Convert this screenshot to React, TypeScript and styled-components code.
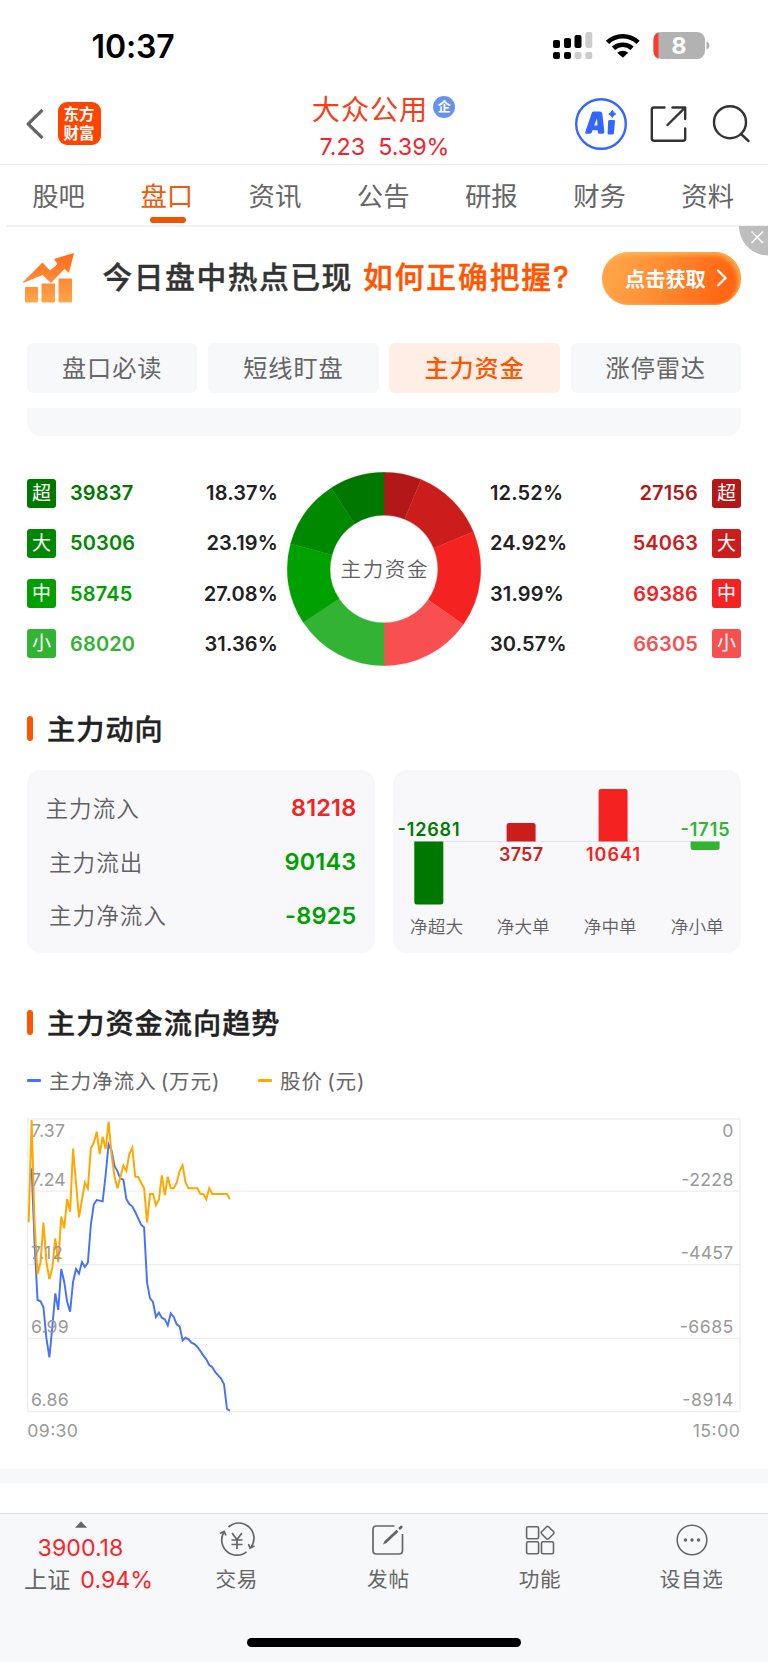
import React from 'react';
import styled, { createGlobalStyle } from 'styled-components';

const Global = createGlobalStyle`
  * { box-sizing: border-box; }
  body { margin: 0; background: #fff; }
`;

const FONT = `Inter, 'Noto Sans CJK SC', 'Liberation Sans', sans-serif`;

const Screen = styled.main`
  width: 768px;
  height: 1662px;
  display: flex;
  flex-direction: column;
  background: #fff;
  font-family: ${FONT};
  color: #222;
  overflow: hidden;
  white-space: nowrap;
`;

const StatusBar = styled.div`
  height: 88px;
  flex: none;
  display: flex;
  justify-content: space-between;
  padding: 0 57px 0 91.5px;
`;
const Clock = styled.div`
  font-size: 32px;
  line-height: 39px;
  font-weight: 600;
  color: #000;
  padding-top: 27px;
  letter-spacing: -0.1px;
`;
const StatusIcons = styled.div`
  padding-top: 30px;
`;

const Header = styled.header`
  height: 77px;
  flex: none;
  display: flex;
  align-items: flex-start;
  border-bottom: 1.5px solid #e8e8ea;
`;
const HeaderLeft = styled.div`
  width: 290px;
  display: flex;
  padding: 14px 0 0 26px;
`;
const BackIcon = styled.svg`
  margin: 6px 13.5px 0 0;
`;
const Logo = styled.div`
  width: 43px;
  height: 43px;
  border-radius: 9px;
  background: #ff4400;
  color: #fff;
  font-family: 'Noto Sans CJK SC', sans-serif;
  font-weight: 700;
  font-size: 15.5px;
  line-height: 18.5px;
  padding: 2px 0 0 6px;
`;
const HeaderTitle = styled.div`
  width: 190px;
  display: flex;
  flex-direction: column;
  align-items: center;
`;
const StockName = styled.div`
  display: flex;
  align-items: center;
  height: 40px;
  margin: -1px 0 0 -3px;
  font-size: 28.2px;
  letter-spacing: 0.9px;
  color: #f4401a;
`;
const Verified = styled.span`
  width: 22px;
  height: 22px;
  border-radius: 50%;
  margin-left: 5px;
  background: #6593ea;
  color: #fff;
  font-size: 13px;
  font-weight: 700;
  line-height: 21px;
  text-align: center;
  letter-spacing: 0;
`;
const StockPrice = styled.div`
  display: flex;
  gap: 13px;
  font-size: 23.3px;
  line-height: 28px;
  margin: 6px 0 0 -1px;
  color: #f5222d;
`;
const HeaderActions = styled.div`
  padding: 10px 0 0 95px;
`;

const Tabs = styled.nav`
  height: 62px;
  flex: none;
  margin-left: 6px;
  display: flex;
  border-bottom: 2px solid #f1f1f2;
`;
const Tab = styled.div<{ $on?: boolean }>`
  width: 108.2px;
  display: flex;
  flex-direction: column;
  align-items: center;
  font-size: 26.4px;
  line-height: 38px;
  padding: 12px 3px 0 0;
  color: ${(p) => (p.$on ? '#f15a0a' : '#666')};
`;
const TabMark = styled.i`
  width: 36px;
  height: 6px;
  border-radius: 3px;
  background: #ef5500;
  margin: 2px 0 0 2px;
`;

const Banner = styled.section`
  position: relative;
  height: 116px;
  flex: none;
  display: flex;
  padding: 24px 27px 0 22px;
`;
const BannerText = styled.div`
  display: flex;
  width: 499px;
  margin-left: 27.5px;
  gap: 10px;
  font-size: 29.8px;
  line-height: 53px;
  font-weight: 500;
  letter-spacing: 1.5px;
  color: #333;
  -webkit-text-stroke: 0.4px currentColor;
`;
const Accent = styled.span`
  color: #ff5500;
  letter-spacing: 1.9px;
`;
const BannerButton = styled.div`
  width: 139px;
  height: 53px;
  border-radius: 27px;
  background: linear-gradient(105deg, #ffa347 10%, #ff8a30 45%, #ff6714 85%);
  box-shadow: inset -3px 3px 4px rgba(255, 200, 95, 0.65), inset 0 -1px 2px rgba(255, 180, 100, 0.6);
  display: flex;
  align-items: center;
  padding-left: 23.5px;
  padding-bottom: 1px;
  gap: 10px;
  margin-top: 1px;
  color: #fff;
  font-size: 20.2px;
  font-weight: 700;
`;
const CloseCorner = styled.svg`
  position: absolute;
  right: 0;
  top: -1px;
`;

const Chips = styled.div`
  flex: none;
  display: grid;
  grid-template-columns: repeat(4, 1fr);
  gap: 10.8px;
  padding: 0 27px;
`;
const Chip = styled.div<{ $on?: boolean }>`
  height: 50px;
  border-radius: 6px;
  background: ${(p) => (p.$on ? '#ffeee6' : '#f7f8fa')};
  color: ${(p) => (p.$on ? '#ff5500' : '#666')};
  font-weight: ${(p) => (p.$on ? 500 : 400)};
  font-size: 24.2px;
  letter-spacing: 0.9px;
  line-height: 52px;
  text-align: center;
`;
const CardTail = styled.div`
  flex: none;
  height: 28px;
  margin: 14.5px 27px 0;
  border-radius: 0 0 14px 14px;
  background: #f7f8fa;
`;

const Distribution = styled.section`
  flex: none;
  height: 194px;
  margin: 36px 27px 0;
  display: flex;
  justify-content: space-between;
`;
const OrderColumn = styled.div`
  width: 251px;
  padding-top: 7px;
`;
const OrderRow = styled.div<{ $flip?: boolean }>`
  height: 29px;
  margin-bottom: 21.3px;
  display: flex;
  align-items: center;
  flex-direction: ${(p) => (p.$flip ? 'row-reverse' : 'row')};
  font-size: 20px;
  letter-spacing: 0.15px;
  line-height: 31px;
  font-weight: 600;
`;
const Badge = styled.span<{ $c: string }>`
  width: 29px;
  height: 29px;
  border-radius: 3px;
  background: ${(p) => p.$c};
  color: #fff;
  font-size: 19px;
  font-weight: 400;
  line-height: 30px;
  letter-spacing: 0;
  text-align: center;
`;
const Amount = styled.span<{ $c: string }>`
  color: ${(p) => p.$c};
  margin: 0 14px;
  padding-top: 1px;
  flex: 1;
`;
const FlipAmount = styled(Amount)`
  text-align: right;
`;
const Percent = styled.span`
  color: #222;
  padding-top: 1px;
`;

const Heading = styled.h2<{ $top: number }>`
  flex: none;
  margin: ${(p) => p.$top}px 27px 0;
  height: 40px;
  display: flex;
  align-items: center;
  font-size: 28.2px;
  font-weight: 500;
  letter-spacing: 1px;
  color: #222;
  -webkit-text-stroke: 0.4px currentColor;
  span {
    padding-bottom: 2px;
  }
  &::before {
    content: '';
    width: 5.5px;
    height: 25px;
    border-radius: 3px;
    background: #ff5500;
    margin-right: 14.5px;
  }
`;

const Panels = styled.section`
  flex: none;
  display: grid;
  grid-template-columns: 1fr 1fr;
  gap: 18px;
  margin: 21px 27px 0;
`;
const Panel = styled.div`
  height: 183px;
  border-radius: 14px;
  background: #f8f8fb;
`;
const FlowPanel = styled(Panel)`
  padding: 11px 18.5px 0;
`;
const FlowRow = styled.div<{ $indent?: boolean; $c: string }>`
  height: 53.8px;
  display: flex;
  align-items: center;
  justify-content: space-between;
  padding-left: ${(p) => (p.$indent ? 3.5 : 0)}px;
  padding-bottom: 1px;
  font-size: 22.5px;
  font-weight: 350;
  letter-spacing: 1.1px;
  color: #606060;
  b {
    font-size: 23.5px;
    font-weight: 600;
    letter-spacing: 0.2px;
    padding-top: 2px;
    color: ${(p) => p.$c};
  }
`;

const Legend = styled.div`
  flex: none;
  display: flex;
  height: 32px;
  margin: 22px 27px 0;
  font-size: 20.6px;
  color: #666;
`;
const LegendItem = styled.div<{ $w: number; $c: string }>`
  width: ${(p) => p.$w}px;
  display: flex;
  align-items: center;
  letter-spacing: 0.9px;
  word-spacing: -2.5px;
  span {
    padding-bottom: 1.5px;
  }
  &::before {
    content: '';
    width: 14px;
    height: 3.5px;
    border-radius: 1px;
    background: ${(p) => p.$c};
    margin-right: 8px;
  }
`;
const TrendChart = styled.svg`
  flex: none;
  display: block;
  margin: 21px 0 0 27px;
`;
const Divider = styled.div`
  flex: none;
  height: 14px;
  margin-top: 26px;
  background: #f7f8fa;
`;

const BottomBar = styled.footer`
  flex: none;
  height: 149.5px;
  margin-top: auto;
  border-top: 1.5px solid #dedfe1;
  background: #f7f8fa;
  display: flex;
  flex-direction: column;
  align-items: center;
`;
const BottomItems = styled.div`
  display: flex;
  width: 100%;
  height: 124px;
`;
const IndexItem = styled.div`
  width: 161px;
  display: flex;
  flex-direction: column;
  align-items: center;
  font-size: 23.2px;
  color: #ff1f28;
`;
const IndexArrow = styled.svg`
  margin-top: 7px;
`;
const IndexLine = styled.div`
  display: flex;
  gap: 10px;
  line-height: 32px;
  margin-left: 16px;
`;
const IndexValue = styled.div`
  line-height: 32px;
  margin-top: 4px;
`;
const IndexName = styled.span`
  color: #666;
`;
const Action = styled.div`
  width: 151.6px;
  display: flex;
  flex-direction: column;
  align-items: center;
  font-size: 20.6px;
  letter-spacing: 0.7px;
  line-height: 30px;
  color: #666;
  svg { margin: 8px 0 7px; }
`;
const HomeIndicator = styled.div`
  width: 274px;
  height: 9px;
  border-radius: 5px;
  background: #000;
`;

const OUT = [
  { name: '超', value: '39837', pct: '18.37%', share: 18.37, color: '#007800' },
  { name: '大', value: '50306', pct: '23.19%', share: 23.19, color: '#008900' },
  { name: '中', value: '58745', pct: '27.08%', share: 27.08, color: '#00a000' },
  { name: '小', value: '68020', pct: '31.36%', share: 31.36, color: '#33b333' },
];
const IN = [
  { name: '超', value: '27156', pct: '12.52%', share: 12.52, color: '#b21818' },
  { name: '大', value: '54063', pct: '24.92%', share: 24.92, color: '#cc1d1d' },
  { name: '中', value: '69386', pct: '31.99%', share: 31.99, color: '#f52222' },
  { name: '小', value: '66305', pct: '30.57%', share: 30.57, color: '#f85050' },
];

function Donut() {
  const c = 97;
  const R = 96.8;
  const r = 53.8;
  const slices = [...IN, ...[...OUT].reverse()];
  let at = 0;
  return (
    <svg width="194" height="194" viewBox="0 0 194 194">
      {slices.map((s, i) => {
        const a = (at / 200) * 2 * Math.PI;
        at += s.share;
        const b = (at / 200) * 2 * Math.PI;
        const p = (q: number, t: number) => `${c + q * Math.sin(t)} ${c - q * Math.cos(t)}`;
        return (
          <path
            key={i}
            fill={s.color}
            stroke={s.color}
            strokeWidth="0.3"
            d={`M${p(R, a)} A${R} ${R} 0 0 1 ${p(R, b)} L${p(r, b)} A${r} ${r} 0 0 0 ${p(r, a)} Z`}
          />
        );
      })}
      <text x="97" y="104.5" textAnchor="middle" fontSize="20.5" fontWeight="350" textLength="87" fill="#606060" fontFamily={FONT}>
        主力资金
      </text>
    </svg>
  );
}

const BARS = [
  { x: 21.3, y: 71.5, h: 63, c: '#007800', v: '-12681', tx: 4.5, ty: 66, w: 62, n: '净超大', nx: 17 },
  { x: 113.6, y: 53, h: 18.5, c: '#cc1d1d', v: '3757', tx: 106, ty: 91, w: 44, n: '净大单', nx: 103.7 },
  { x: 205.6, y: 19, h: 52.5, c: '#f52222', v: '10641', tx: 193, ty: 91, w: 54, n: '净中单', nx: 190.7 },
  { x: 297.6, y: 71.5, h: 8.5, c: '#33b333', v: '-1715', tx: 287.5, ty: 66, w: 49, n: '净小单', nx: 277.7 },
];

function NetBars() {
  return (
    <svg width="348" height="183" viewBox="0 0 348 183" fontFamily={FONT}>
      <path d="M21 71.5H327" stroke="#e4e4e8" />
      {BARS.map((b) => {
        const up = b.y < 71;
        return (
          <g key={b.n}>
            <path
              fill={b.c}
              d={
                up
                  ? `M${b.x} ${b.y + b.h}V${b.y + 2.5}q0-2.5 2.5-2.5h24q2.5 0 2.5 2.5V${b.y + b.h}z`
                  : `M${b.x} ${b.y}V${b.y + b.h - 2.5}q0 2.5 2.5 2.5h24q2.5 0 2.5-2.5V${b.y}z`
              }
            />
            <text x={b.tx} y={b.ty} fontSize="18" fontWeight="600" fill={b.c} textLength={b.w}>
              {b.v}
            </text>
            <text x={b.nx} y="163" fontSize="17.6" fontWeight="350" fill="#606060" textLength="53">
              {b.n}
            </text>
          </g>
        );
      })}
    </svg>
  );
}

// Chart units are thirds of a pixel, one sample per minute.
const STEP = 8.88;
const START = 86;
const PRICE = [
  367, 60, 370, 523, 487, 368, 485, 538, 503, 415, 487, 350, 385, 297, 335, 146, 250, 352, 300, 248, 265, 145, 128, 95,
  162, 110, 147, 65, 163, 230, 265, 230, 197, 213, 162, 143, 230, 231, 248, 265, 367, 282, 282, 316, 299, 226, 285, 230,
  265, 265, 248, 213, 196, 247, 265, 265, 265, 265, 282, 282, 298, 265, 282, 282, 282, 282, 282, 282, 298,
];
const FLOW = [
  205, 430, 600, 604, 622, 715, 772, 680, 580, 630, 507, 545, 605, 635, 545, 507, 521, 486, 501, 488, 375, 313, 300,
  302, 304, 225, 133, 152, 198, 214, 236, 239, 297, 312, 319, 336, 355, 374, 382, 548, 595, 606, 651, 638, 653, 658,
  676, 640, 651, 673, 679, 721, 713, 718, 728, 732, 741, 753, 766, 778, 795, 801, 816, 826, 836, 853, 927, 932,
];
const line = (ys: number[], from: number) => ys.map((y, i) => `${START + (i + from) * STEP},${y}`).join(' ');

const AXIS = [
  { y: 112, l: '7.37', lw: 102, r: '0', rw: 30 },
  { y: 258, l: '7.24', lw: 104, r: '-2228', rw: 156 },
  { y: 478, l: '7.12', lw: 95, r: '-4457', rw: 158 },
  { y: 699, l: '6.99', lw: 113, r: '-6685', rw: 161 },
  { y: 919, l: '6.86', lw: 113, r: '-8914', rw: 153 },
];

function Trend() {
  return (
    <TrendChart width="714" height="325" viewBox="81 54 2142 975" fontFamily={FONT}>
      <g stroke="#eeeeef" strokeWidth="4" fill="none">
        <path d="M83 57H2220V935H83zM83 273.5H2220M83 494H2220M83 715H2220" />
      </g>
      <polyline points={line(FLOW, 1)} fill="none" stroke="#4472f8" strokeWidth="5.8" />
      <polyline points={line(PRICE, 0)} fill="none" stroke="#ffa800" strokeWidth="6" />
      <g fontSize="53" fill="#999">
        {AXIS.map((a) => (
          <React.Fragment key={a.y}>
            <text x="93" y={a.y} textLength={a.lw}>{a.l}</text>
            <text x="2200" y={a.y} textAnchor="end" textLength={a.rw}>{a.r}</text>
          </React.Fragment>
        ))}
        <text x="82" y="1010" textLength="152">09:30</text>
        <text x="2220" y="1010" textAnchor="end" textLength="142">15:00</text>
      </g>
    </TrendChart>
  );
}

const TABS = ['股吧', '盘口', '资讯', '公告', '研报', '财务', '资料'];

export default function App() {
  return (
    <Screen>
      <Global />
      <StatusBar>
        <Clock>10:37</Clock>
        <StatusIcons>
          <svg width="158" height="32" viewBox="0 0 158 32">
            <g>
              <rect x="0" y="10" width="7" height="8" rx="2" />
              <rect x="11" y="8" width="7" height="10" rx="2" />
              <rect x="21.5" y="5" width="7" height="13" rx="2" />
              <rect x="32.3" y="2" width="7" height="16" rx="2" fill="#ccc" />
              <rect x="0" y="22" width="7" height="7" rx="2" />
              <rect x="11" y="22" width="7" height="7" rx="2" />
              <rect x="21.5" y="22" width="7" height="7" rx="2" fill="#ccc" />
              <rect x="32.3" y="22" width="7" height="7" rx="2" fill="#ccc" />
            </g>
            <g fill="none" stroke="#000" strokeWidth="4.6">
              <path d="M54.5 12.4a22 22 0 0 1 30.6 0" />
              <path d="M60.5 18.3a13.8 13.8 0 0 1 18.600 0" />
            </g>
            <path d="M64.3 22.8a8.2 8.2 0 0 1 11 0L69.8 27.8z" />
            <rect x="100.5" y="2" width="51.5" height="27" rx="8" fill="#b2b2b2" />
            <path d="M105.5 2.300a8 8 0 0 0-5 7.700v11a8 8 0 0 0 5 7.700z" fill="#ff3b30" />
            <path d="M153.5 11.2q3 1.5 3 4.3t-3 4.3z" fill="#b2b2b2" />
            <text x="126" y="23.5" fontSize="23.5" fontWeight="700" fill="#fff" textAnchor="middle">8</text>
          </svg>
        </StatusIcons>
      </StatusBar>

      <Header>
        <HeaderLeft>
          <BackIcon width="18" height="32" viewBox="0 0 18 32" fill="none" stroke="#666" strokeWidth="3.2">
            <path d="M16.5 1.8L2.2 16l14.3 14.2" strokeLinejoin="round" />
          </BackIcon>
          <Logo>
            东方
            <br />
            财富
          </Logo>
        </HeaderLeft>
        <HeaderTitle>
          <StockName>
            大众公用<Verified>企</Verified>
          </StockName>
          <StockPrice>
            <span>7.23</span>
            <span>5.39%</span>
          </StockPrice>
        </HeaderTitle>
        <HeaderActions>
          <svg width="180" height="54" viewBox="0 0 180 54" fill="none">
            <circle cx="26" cy="26" r="24.8" stroke="#3366ff" strokeWidth="2.4" />
            <g fill="#3366ff">
              <path
                fillRule="evenodd"
                d="M17 14.3Q17.6 13.6 19 13.6h6Q27 13.6 27.3 15.5L29.400 34Q29.400 35.8 27.5 35.8H24.5Q23 35.8 22.900 34.4L22.700 32.3H17.500L16.700 34.5Q16.200 35.8 14.700 35.8H11.500Q9.500 35.8 10.300 34zM22 20.500L19.100 27.600H22.500z"
              />
              <path d="M34.5 22h4.2q1.4 0 1.3 1.4L38.9 35.2q-.2 1.3-1.5 1.3h-3.6q-1.4 0-1.2-1.5L33.2 23.3q.2-1.300 1.300-1.300z" />
              <path d="M37.3 12.3q1 2.7 3.5 3.6-2.5 1-3.5 3.5-1-2.5-3.5-3.5 2.5-.9 3.5-3.6z" stroke="#3366ff" />
            </g>
            <g stroke="#333" strokeWidth="2.4" strokeLinecap="round" strokeLinejoin="round">
              <path d="M89.5 9.5H79q-2.2 0-2.2 2.2V40.5q0 2.2 2.2 2.2H108q2.2 0 2.2-2.2V30.5" />
              <path d="M97.5 9.500H110.200V21M110 9.700L92.500 27" />
              <circle cx="155" cy="24.2" r="16" />
              <path d="M166 36L173.5 43" />
            </g>
          </svg>
        </HeaderActions>
      </Header>

      <Tabs>
        {TABS.map((t, i) => (
          <Tab key={t} $on={i === 1}>
            {t}
            {i === 1 && <TabMark />}
          </Tab>
        ))}
      </Tabs>

      <Banner>
        <svg width="53" height="54" viewBox="0 0 53 54">
          <defs>
            <linearGradient id="growth" x1="0" y1="0" x2="0" y2="1" gradientUnits="objectBoundingBox">
              <stop offset="0" stopColor="#ff6a1a" />
              <stop offset="1" stopColor="#ffa54c" />
            </linearGradient>
          </defs>
          <path
            fill="url(#growth)"
            d="M1 31L20.500 11.500L28 19.500L35.500 13L32 8L52 2L47 22L42.500 18L29 32L20.500 24L1 32zM4 36h11q1 0 1 1v13.500q0 1-1 1H4q-1 0-1-1V37q0-1 1-1zM20.500 32.500h11.500q1 0 1 1v17q0 1-1 1h-11.500q-1 0-1-1V33.500q0-1 1-1zM37.500 27.500H49q1 0 1 1V50.500q0 1-1 1H37.500q-1 0-1-1V28.500q0-1 1-1z"
          />
        </svg>
        <BannerText>
          今日盘中热点已现<Accent>如何正确把握?</Accent>
        </BannerText>
        <BannerButton>
          点击获取
          <svg width="12" height="18" viewBox="0 0 12 18" fill="none" stroke="#fff" strokeWidth="2.2">
            <path d="M2 1.5L9.5 9L2 16.5" strokeLinecap="round" />
          </svg>
        </BannerButton>
        <CloseCorner width="29" height="30" viewBox="0 0 29 30">
          <path d="M0 0H29V29.500C13 29.500 0 16 0 0z" fill="#bebebe" />
          <path d="M12.500 5.500L24 17M24 5.500L12.500 17" stroke="#fff" strokeWidth="1.6" />
        </CloseCorner>
      </Banner>

      <Chips>
        <Chip>盘口必读</Chip>
        <Chip>短线盯盘</Chip>
        <Chip $on>主力资金</Chip>
        <Chip>涨停雷达</Chip>
      </Chips>
      <CardTail />

      <Distribution>
        <OrderColumn>
          {OUT.map((o) => (
            <OrderRow key={o.name}>
              <Badge $c={o.color}>{o.name}</Badge>
              <Amount $c={o.color}>{o.value}</Amount>
              <Percent>{o.pct}</Percent>
            </OrderRow>
          ))}
        </OrderColumn>
        <Donut />
        <OrderColumn>
          {IN.map((o) => (
            <OrderRow key={o.name} $flip>
              <Badge $c={o.color}>{o.name}</Badge>
              <FlipAmount $c={o.color}>{o.value}</FlipAmount>
              <Percent>{o.pct}</Percent>
            </OrderRow>
          ))}
        </OrderColumn>
      </Distribution>

      <Heading $top={43}>
        <span>主力动向</span>
      </Heading>
      <Panels>
        <FlowPanel>
          <FlowRow $c="#f52222">
            主力流入<b>81218</b>
          </FlowRow>
          <FlowRow $indent $c="#00a000">
            主力流出<b>90143</b>
          </FlowRow>
          <FlowRow $indent $c="#00a000">
            主力净流入<b>-8925</b>
          </FlowRow>
        </FlowPanel>
        <Panel>
          <NetBars />
        </Panel>
      </Panels>

      <Heading $top={50}>
        <span>主力资金流向趋势</span>
      </Heading>
      <Legend>
        <LegendItem $w={231} $c="#4472f8">
          <span>主力净流入 (万元)</span>
        </LegendItem>
        <LegendItem $w={120} $c="#ffa800">
          <span>股价 (元)</span>
        </LegendItem>
      </Legend>
      <Trend />
      <Divider />

      <BottomBar>
        <BottomItems>
          <IndexItem>
            <IndexArrow width="12" height="7" viewBox="0 0 12 7">
              <path d="M6 0.3L12 6.8H0z" fill="#666" />
            </IndexArrow>
            <IndexValue>3900.18</IndexValue>
            <IndexLine>
              <IndexName>上证</IndexName>
              <span>0.94%</span>
            </IndexLine>
          </IndexItem>
          <Action>
            <svg width="36" height="36" viewBox="0 0 36 36" fill="none" stroke="#666" strokeWidth="1.7">
              <path d="M9.500 5A15.200 15.200 0 0 1 31.800 25.500M27.500 29.800A15.200 15.200 0 0 1 4.700 10.500" />
              <path d="M0.800 11.500L5.200 9.500L7 13.500M29.500 22L31 26L35.500 24" />
              <path d="M13 11l5 6.500L23 11M18 17.500V27M12.500 18H23.500M12.500 22.500H23.500" />
            </svg>
            交易
          </Action>
          <Action>
            <svg width="36" height="36" viewBox="0 0 36 36" fill="none" stroke="#666" strokeWidth="1.7">
              <path d="M24.500 4H6.500Q3 4 3 7.500V28.500Q3 32 6.500 32H29Q32.500 32 32.500 28.500V12" />
              <path d="M13 22.500L14.500 19L26.500 7.700L28.500 9.700L16.500 21z" fill="#666" stroke="none" />
              <path d="M30 6.200L31.300 5" strokeWidth="2.800" strokeLinecap="round" />
            </svg>
            发帖
          </Action>
          <Action>
            <svg width="36" height="36" viewBox="0 0 36 36" fill="none" stroke="#666" strokeWidth="1.6">
              <rect x="4.600" y="4.800" width="12" height="12" rx="1.500" />
              <rect x="4.600" y="19.800" width="12" height="12" rx="1.500" />
              <rect x="19.500" y="19.800" width="12" height="12" rx="1.500" />
              <path d="M24.600 4.800q1-1 2 0l5 5q1 1 0 2l-5 5q-1 1-2 0l-5-5q-1-1 0-2z" />
            </svg>
            功能
          </Action>
          <Action>
            <svg width="36" height="36" viewBox="0 0 36 36">
              <circle cx="18" cy="18" r="14.8" fill="none" stroke="#666" strokeWidth="1.6" />
              <g fill="#666">
                <circle cx="11.500" cy="18" r="1.700" />
                <circle cx="18" cy="18" r="1.700" />
                <circle cx="24.500" cy="18" r="1.700" />
              </g>
            </svg>
            设自选
          </Action>
        </BottomItems>
        <HomeIndicator />
      </BottomBar>
    </Screen>
  );
}
